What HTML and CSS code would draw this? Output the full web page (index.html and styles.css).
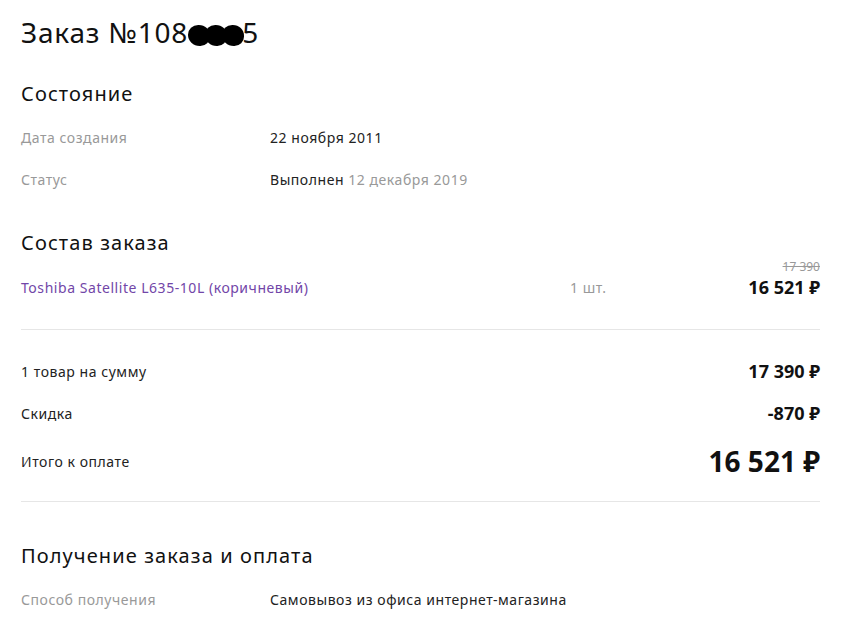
FILE: index.html
```html
<!DOCTYPE html>
<html lang="ru">
<head>
    <meta charset="UTF-8">
    <meta name="viewport" content="width=device-width, initial-scale=1.0">
    <title>Заказ</title>
    <link rel="stylesheet" href="styles.css">
</head>
<body>
    <div class="order">
        <h1 class="order-title">Заказ №108<span class="hidden-digits"><i></i><i></i><i></i></span>5</h1>

        <section class="block">
            <h2 class="block-title">Состояние</h2>
            <div class="info-row">
                <div class="info-label">Дата создания</div>
                <div class="info-value">22 ноября 2011</div>
            </div>
            <div class="info-row">
                <div class="info-label">Статус</div>
                <div class="info-value">Выполнен <span class="muted">12 декабря 2019</span></div>
            </div>
        </section>

        <section class="block block-items">
            <h2 class="block-title">Состав заказа</h2>
            <div class="item">
                <a class="item-name" href="#">Toshiba Satellite L635-10L (коричневый)</a>
                <div class="item-qty">1 шт.</div>
                <div class="item-price">
                    <div class="old-price">17 390</div>
                    <div class="price">16 521 ₽</div>
                </div>
            </div>
        </section>

        <div class="summary">
            <div class="summary-row">
                <div>1 товар на сумму</div>
                <div class="price">17 390 ₽</div>
            </div>
            <div class="summary-row">
                <div>Скидка</div>
                <div class="price">-870 ₽</div>
            </div>
            <div class="summary-row total">
                <div>Итого к оплате</div>
                <div class="price price-big">16 521 ₽</div>
            </div>
        </div>

        <section class="block block-delivery">
            <h2 class="block-title">Получение заказа и оплата</h2>
            <div class="info-row">
                <div class="info-label">Способ получения</div>
                <div class="info-value">Самовывоз из офиса интернет-магазина</div>
            </div>
        </section>
    </div>
</body>
</html>
```

FILE: styles.css
```css
body {
    margin: 0;
    background-color: #fff;
    color: #222;
    font-family: "Noto Sans", Arial, sans-serif;
    font-size: 14px;
    letter-spacing: 0.55px;
}

.order {
    width: 799px;
    padding: 13px 0 0 21px;
}

.order-title {
    margin: 0;
    font-size: 28px;
    font-weight: 400;
    line-height: 38px;
    letter-spacing: 0.8px;
    color: #111;
}

.hidden-digits {
    display: inline-flex;
    align-items: center;
    width: 54px;
    height: 24px;
    vertical-align: -3px;
}

.hidden-digits i {
    display: block;
    width: 22px;
    height: 21px;
    margin-right: -5px;
    background: #000;
    border-radius: 48% 52% 45% 55%;
}

.block {
    margin-top: 30px;
}

.block-title {
    margin: 0 0 9px;
    font-size: 20px;
    font-weight: 400;
    line-height: 26px;
    letter-spacing: 1.1px;
    color: #111;
}

.info-row {
    display: flex;
    height: 42px;
    align-items: center;
}

.info-label {
    width: 249px;
    color: #999;
}

.info-value {
    color: #222;
}

.muted {
    color: #999;
}

.block-items {
    margin-top: 30px;
}

.block-items .block-title {
    margin-bottom: 3px;
}

.item {
    display: flex;
    align-items: flex-end;
    padding-bottom: 30px;
    border-bottom: 1px solid #e6e6e6;
}

.item-name {
    width: 549px;
    color: #7246a8;
    text-decoration: none;
    line-height: 22px;
}

.item-qty {
    flex: 1;
    color: #999;
    line-height: 22px;
}

.item-price {
    text-align: right;
}

.old-price {
    font-size: 12px;
    line-height: 16px;
    letter-spacing: 0;
    color: #999;
    text-decoration: line-through;
}

.price {
    font-size: 18px;
    font-weight: 700;
    color: #111;
    line-height: 24px;
    letter-spacing: 0;
}

.summary {
    padding: 20px 0 13px;
    border-bottom: 1px solid #e6e6e6;
}

.summary-row {
    display: flex;
    justify-content: space-between;
    align-items: center;
    height: 42px;
}

.summary-row.total {
    height: 54px;
}

.price-big {
    font-size: 28px;
    line-height: 34px;
}

.block-delivery {
    margin-top: 41px;
}
```
